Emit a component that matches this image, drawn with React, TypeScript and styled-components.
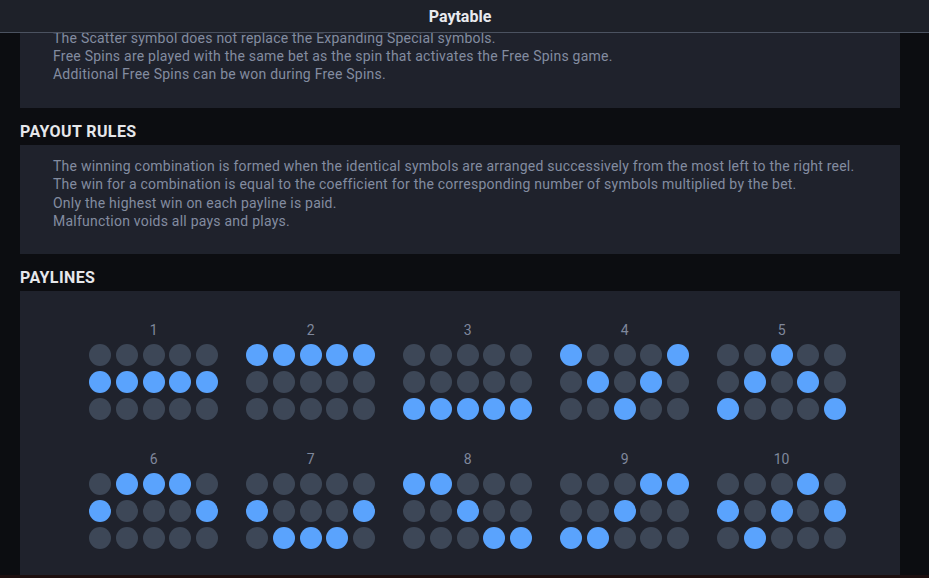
import React, { useLayoutEffect, useRef } from "react";
import styled, { createGlobalStyle } from "styled-components";

const GlobalStyle = createGlobalStyle`
  html, body { margin: 0; padding: 0; background: #0c0d11; }
  body { font-family: Roboto, "Noto Sans", Arial, sans-serif; }
  * { box-sizing: border-box; }
`;

const Page = styled.div`
  width: 929px;
  height: 578px;
  display: flex;
  flex-direction: column;
  background: #0c0d11;
  overflow: hidden;
`;

const Header = styled.header`
  flex: 0 0 33px;
  display: flex;
  align-items: center;
  justify-content: center;
  padding-right: 9px;
  background: #1e2129;
  border-bottom: 1px solid #4b5260;
  color: #e9eaee;
  font-size: 16px;
  font-weight: 700;
  position: relative;
  z-index: 2;
`;

const Scroll = styled.div`
  position: relative;
  flex: 1 1 auto;
  overflow: hidden;
  padding: 0 29px 0 20px;
`;

const Footer = styled.div`
  flex: 0 0 3px;
  background: #1d0f0f;
`;

const Title = styled.h2`
  margin: 14px 0 3px;
  height: 20px;
  line-height: 20px;
  font-size: 16px;
  font-weight: 700;
  letter-spacing: 0.4px;
  color: #e6e7eb;
  text-transform: uppercase;
`;

const Card = styled.section`
  background: #1f222c;
  padding: 12px 33px 24.5px;
`;

const Line = styled.p`
  margin: 0;
  font-size: 14px;
  line-height: 18.2px;
  letter-spacing: 0.23px;
  color: #838ca0;
  white-space: nowrap;
`;

const LinesCard = styled.section`
  margin-top: 1px;
  background: #1f222c;
  padding: 30px 0 40px 69.3px;
  display: grid;
  grid-template-columns: repeat(5, 128.8px);
  column-gap: 28.2px;
  row-gap: 30.6px;
`;

const Payline = styled.div`
  display: flex;
  flex-direction: column;
  align-items: center;
`;

const Num = styled.div`
  height: 18px;
  line-height: 18px;
  font-size: 14px;
  color: #7f889c;
  margin-bottom: 5px;
`;

const Dots = styled.div`
  display: grid;
  grid-template-columns: repeat(5, 22px);
  grid-auto-rows: 22px;
  gap: 4.7px;
`;

const Dot = styled.span<{ $on: boolean }>`
  width: 22px;
  height: 22px;
  border-radius: 50%;
  background: ${(p) => (p.$on ? "#5aa3fd" : "#3d4757")};
`;

const PATTERNS: number[][] = [
  [1, 1, 1, 1, 1],
  [0, 0, 0, 0, 0],
  [2, 2, 2, 2, 2],
  [0, 1, 2, 1, 0],
  [2, 1, 0, 1, 2],
  [1, 0, 0, 0, 1],
  [1, 2, 2, 2, 1],
  [0, 0, 1, 2, 2],
  [2, 2, 1, 0, 0],
  [1, 2, 1, 0, 1],
];

export default function App() {
  const scrollRef = useRef<HTMLDivElement>(null);
  const anchorRef = useRef<HTMLParagraphElement>(null);

  useLayoutEffect(() => {
    const s = scrollRef.current;
    const a = anchorRef.current;
    if (s && a) s.scrollTop = a.offsetTop + 4.4;
  }, []);

  return (
    <>
      <GlobalStyle />
      <Page>
        <Header>Paytable</Header>
        <Scroll ref={scrollRef}>
          <Card>
            <Line ref={anchorRef}>The Scatter symbol does not replace the Expanding Special symbols.</Line>
            <Line>Free Spins are played with the same bet as the spin that activates the Free Spins game.</Line>
            <Line>Additional Free Spins can be won during Free Spins.</Line>
          </Card>
          <Title>Payout rules</Title>
          <Card>
            <Line>
              The winning combination is formed when the identical symbols are arranged successively from the most left to the right reel.
            </Line>
            <Line>
              The win for a combination is equal to the coefficient for the corresponding number of symbols multiplied by the bet.
            </Line>
            <Line>Only the highest win on each payline is paid.</Line>
            <Line>Malfunction voids all pays and plays.</Line>
          </Card>
          <Title>Paylines</Title>
          <LinesCard>
            {PATTERNS.map((pat, i) => (
              <Payline key={i}>
                <Num>{i + 1}</Num>
                <Dots>
                  {[0, 1, 2].map((row) =>
                    pat.map((r, col) => <Dot key={`${row}-${col}`} $on={r === row} />)
                  )}
                </Dots>
              </Payline>
            ))}
          </LinesCard>
        </Scroll>
        <Footer />
      </Page>
    </>
  );
}
